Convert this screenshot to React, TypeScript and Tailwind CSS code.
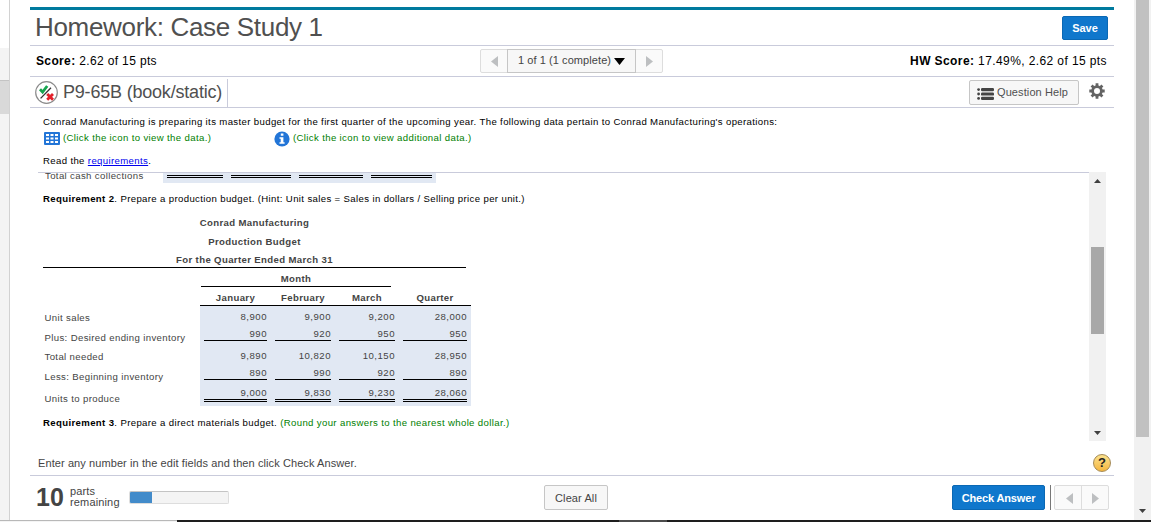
import type { ReactNode } from 'react';

const columns = [
  { width: 'w-[63px]', values: ['8,900', '990', '9,890', '890', '9,000'] },
  { width: 'w-[56px]', values: ['9,900', '920', '10,820', '990', '9,830'] },
  { width: 'w-[56px]', values: ['9,200', '950', '10,150', '920', '9,230'] },
  { width: 'w-[64px]', values: ['28,000', '950', '28,950', '890', '28,060'] },
];

export default function App() {
  return (
    <div
      className={`flex h-[522px] w-[1151px] flex-col overflow-hidden bg-white font-["Liberation_Sans",Arial,sans-serif] whitespace-nowrap text-[#444]`}
    >
      <div className="flex h-[520px]">
        <LeftRail />
        <main className="ml-5 flex w-[1084px] flex-col">
          <TitleBar />
          <ScoreBar />
          <QuestionBar />
          <Prompt />
          <AnswerPanel />
          <Instructions />
          <Footer />
        </main>
        <PageScrollbar />
      </div>
      <div className="flex h-0.5">
        <div className="w-[177px] border-t border-[#b8b8b8] bg-[#f4f4f4]" />
        <div className="w-[442px] bg-[#1e1e1e]" />
        <div className="w-12 bg-[#4c4c4c]" />
        <div className="flex-1 bg-[#1e1e1e]" />
      </div>
    </div>
  );
}

function LeftRail() {
  return (
    <div className="flex w-2.5 flex-col border-r border-[#d2d2d2]">
      <div className="h-12 bg-white" />
      <div className="h-[33px] border-b border-[#c4c4c4] bg-[#f4f4f4]" />
      <div className="h-[33px] bg-[#d9d9d9]" />
      <div className="flex-1 bg-[#f4f4f4]" />
    </div>
  );
}

function TitleBar() {
  return (
    <header className="mt-[7px] flex h-[39px] items-start justify-between border-t-[3px] border-b border-t-[#007a9e] border-b-[#c9cbdb] pr-1.5 pl-[5px]">
      <h1 className="text-[26px] leading-[34px] tracking-[-0.32px] text-[#505050]">
        Homework: Case Study 1
      </h1>
      <button className="mt-1.5 h-6 w-[46px] rounded-xs border border-[#0a68b4] bg-[#0f77cc] text-[11px] leading-5 font-bold text-white">
        Save
      </button>
    </header>
  );
}

function ScoreBar() {
  return (
    <div className="flex h-[31px] items-center border-b border-[#c9cbdb] pr-[7px] pl-1.5 text-xs tracking-[0.36px] text-black">
      <p className="w-[444px]">
        <b>Score:</b> 2.62 of 15 pts
      </p>
      <div className="flex h-6 w-[183px] rounded-xs border border-[#ddd] bg-[#fafafa]">
        <span className="flex w-[26px] items-center justify-center">
          <Arrow dir="left" />
        </span>
        <span className="-my-px flex w-[129px] items-center justify-center gap-[3px] border border-[#c6c6c6] bg-[#f7f7f7] pb-0.5 text-[11px] tracking-[0.08px] text-[#444]">
          1 of 1 (1 complete)
          <svg width="11" height="7" viewBox="0 0 11 7" className="mt-0.5">
            <path d="M0 0h11L5.5 7Z" fill="#000" />
          </svg>
        </span>
        <span className="flex flex-1 items-center justify-center">
          <Arrow dir="right" />
        </span>
      </div>
      <p className="ml-auto tracking-[0.4px]">
        <b>HW Score:</b> 17.49%, 2.62 of 15 pts
      </p>
    </div>
  );
}

function QuestionBar() {
  return (
    <div className="flex h-[31px] border-b border-[#c9cbdb] pl-[5px]">
      <div className="mt-0.5 flex h-7 w-[193px] items-center gap-[5px] border-r border-[#c9cbdb]">
        <svg width="23" height="23" viewBox="0 0 23 23" fill="none" className="mb-0.5">
          <circle cx="11.5" cy="11.5" r="10.8" stroke="#8b8b8b" strokeWidth="1.2" />
          <path d="M5 8.3 7.6 11l4.6-6" stroke="#17a650" strokeWidth="2.8" />
          <path d="m5.6 17.4 10.4-10.6" stroke="#333" strokeWidth="1.3" />
          <path d="m12.2 13 5.8 5.8m0-5.8-5.8 5.8" stroke="#e3202a" strokeWidth="2.8" />
        </svg>
        <h2 className="-mt-0.5 text-lg leading-[26px] tracking-[-0.2px] text-[#505050]">P9-65B (book/static)</h2>
      </div>
      <button className="mt-[3px] ml-auto flex h-[25px] w-[110px] items-center gap-0.5 rounded-xs border border-[#c6c6c6] bg-[#f7f7f7] pl-[7px] text-[11px] tracking-[0.1px] text-[#505050]">
        <svg width="18" height="12" viewBox="0 0 18 12" fill="#444" className="mt-0.5">
          <circle cx="1.6" cy="1.6" r="1.4" />
          <circle cx="1.6" cy="6" r="1.4" />
          <circle cx="1.6" cy="10.4" r="1.4" />
          <rect x="4" y="0" width="13" height="3.2" rx="1.2" />
          <rect x="4" y="4.4" width="13" height="3.2" rx="1.2" />
          <rect x="4" y="8.8" width="13" height="3.2" rx="1.2" />
        </svg>
        Question Help
      </button>
      <svg width="16" height="16" viewBox="0 0 16 16" fill="none" stroke="#636363" className="mt-1.5 mr-[9px] ml-2.5">
        <circle cx="8" cy="8" r="4.4" strokeWidth="2.8" />
        <path
          d="M8 .3v3M8 12.7v3M.3 8h3M12.7 8h3M2.6 2.6l2 2M11.4 11.4l2 2M13.4 2.6l-2 2M4.6 11.4l-2 2"
          strokeWidth="2.8"
        />
      </svg>
    </div>
  );
}

function Prompt() {
  return (
    <section className="flex h-16 flex-col pl-[13px] text-[9.6px] tracking-[0.36px] text-black">
      <p className="mt-[5px] h-[17px] leading-[17px]">
        Conrad Manufacturing is preparing its master budget for the first quarter of the upcoming year. The following
        data pertain to Conrad Manufacturing's operations:
      </p>
      <div className="flex h-[18px] text-[#008000]">
        <div className="flex w-[231px] gap-[3px]">
          <svg width="16" height="13" viewBox="0 0 16 13" className="mt-0.5 ml-px">
            <rect width="16" height="13" rx="1" fill="#2275d7" />
            <path
              d="M2 2h3v2H2zM6.5 2h3v2h-3zM11 2h3v2h-3zM2 5.5h3v2H2zM6.5 5.5h3v2h-3zM11 5.5h3v2h-3zM2 9h3v2H2zM6.5 9h3v2h-3zM11 9h3v2h-3z"
              fill="#fff"
            />
          </svg>
          <span className="leading-[15px]">(Click the icon to view the data.)</span>
        </div>
        <div className="flex gap-[3px]">
          <svg width="16" height="16" viewBox="0 0 16 16" className="mt-px">
            <circle cx="8" cy="8" r="7.6" fill="#2275d7" />
            <path d="M6.8 2.5h2.6v2.3H6.8zM5.5 6.2h3.9v5h1.2v1.6H5.5v-1.6h1.2V7.8H5.5z" fill="#fff" />
          </svg>
          <span className="leading-[15px]">(Click the icon to view additional data.)</span>
        </div>
      </div>
      <p className="mt-1 leading-[18px]">
        Read the <a className="text-[#0000ee] underline">requirements</a>.
      </p>
    </section>
  );
}

function AnswerPanel() {
  return (
    <section className="flex h-[269px] text-[9.6px] tracking-[0.36px]">
      <div className="ml-2 flex w-[1051px] flex-col overflow-hidden border-t border-[#c9cbdb] pl-[5px]">
        <CashCollections />
        <p className="mt-2 leading-4 text-black">
          <b>Requirement 2</b>. Prepare a production budget. (Hint: Unit sales = Sales in dollars / Selling price per
          unit.)
        </p>
        <ProductionBudget />
        <p className="mt-2 leading-[17px] text-black">
          <b>Requirement 3</b>. Prepare a direct materials budget.{' '}
          <span className="text-[#008000]">(Round your answers to the nearest whole dollar.)</span>
        </p>
      </div>
      <div className="flex w-[17px] flex-col items-center bg-[#f1f1f1]">
        <Caret up />
        <div className="mt-[63px] h-[87px] w-[13px] bg-[#a8a8a8]" />
        <div className="mt-auto mb-1.5">
          <Caret />
        </div>
      </div>
    </section>
  );
}

function CashCollections() {
  return (
    <div className="flex h-2.5">
      <span className="-mt-1.5 w-[120px] pl-0.5 leading-[17px]">Total cash collections</span>
      <div className="flex h-2.5 w-[273px] gap-2 bg-[#e1e8f3] pt-0.5 pl-1">
        <DoubleRule className="w-14" />
        <DoubleRule className="w-[60px]" />
        <DoubleRule className="w-16" />
        <DoubleRule className="w-[61px]" />
      </div>
    </div>
  );
}

function ProductionBudget() {
  return (
    <div className="mt-1.5 flex w-[428px] flex-col">
      <div className="flex h-[55px] w-[423px] flex-col items-center border-b border-black font-bold">
        <span className="h-[19px] leading-[19px]">Conrad Manufacturing</span>
        <span className="h-[18px] leading-5">Production Budget</span>
        <span className="h-[17px] leading-5">For the Quarter Ended March 31</span>
      </div>
      <div className="ml-[158px] h-[19px] w-[190px] border-b border-black text-center leading-[22px] font-bold">
        Month
      </div>
      <div className="ml-[157px] flex h-[19px] w-[271px] border-b border-black text-center leading-[21px] font-bold">
        <span className="w-[71px]">January</span>
        <span className="w-16">February</span>
        <span className="w-16">March</span>
        <span className="flex-1">Quarter</span>
      </div>
      <div className="flex h-[100px]">
        <div className="flex w-[157px] flex-col pl-[1.5px]">
          <span className="h-[22px] leading-[23px]">Unit sales</span>
          <span className="h-5 leading-5">Plus: Desired ending inventory</span>
          <span className="h-[19px] leading-[18px]">Total needed</span>
          <span className="h-[21px] leading-[21px]">Less: Beginning inventory</span>
          <span className="leading-[23px]">Units to produce</span>
        </div>
        <div className="flex w-[271px] gap-2 bg-[#e1e8f3] pl-1">
          {columns.map(({ width, values }, i) => (
            <div key={i} className={`flex flex-col text-right ${width}`}>
              <Amount className="h-[19px] leading-[21px]">{values[0]}</Amount>
              <Amount className="h-4 border-b border-black leading-[17px]">{values[1]}</Amount>
              <Amount className="h-[23px] leading-[30px]">{values[2]}</Amount>
              <Amount className="h-4 border-b border-black leading-[18px]">{values[3]}</Amount>
              <Amount className="h-[19px] leading-[25px]">{values[4]}</Amount>
              <DoubleRule className={width} />
            </div>
          ))}
        </div>
      </div>
    </div>
  );
}

function Amount({ className, children }: { className: string; children: ReactNode }) {
  return <span className={`tracking-[0.5px] ${className}`}>{children}</span>;
}

function DoubleRule({ className }: { className: string }) {
  return <div className={`h-[3px] border-y border-black ${className}`} />;
}

function Instructions() {
  return (
    <div className="flex h-[35px] items-center justify-between border-b border-[#c9cbdb] pr-[3px] pl-2 text-[11px] tracking-[0.09px]">
      <p className="mt-2.5">Enter any number in the edit fields and then click Check Answer.</p>
      <span className="mt-2.5 flex h-[18px] w-[18px] items-center justify-center rounded-full border border-[#a58a55] bg-linear-to-b from-[#fbe28c] to-[#f4b63c] text-[13px] font-bold tracking-normal text-[#222]">
        ?
      </span>
    </div>
  );
}

function Footer() {
  return (
    <footer className="flex h-11 items-start pl-1.5">
      <span className="mt-1.5 w-[34px] text-[25px] leading-[30px] font-bold">10</span>
      <p className="mt-[10px] w-[59px] text-[11px] leading-[11px] tracking-[0.15px]">
        parts
        <br />
        remaining
      </p>
      <div className="mt-[15px] h-[13px] w-[100px] overflow-hidden rounded-xs border border-[#ddd] border-t-[#c4c4c4] bg-[#f4f4f4]">
        <div className="-mt-px -ml-px h-[13px] w-[23px] bg-[#428bca]" />
      </div>
      <button className="mt-[9px] ml-[315px] h-[25px] w-16 rounded-xs border border-[#c6c6c6] bg-[#f7f7f7] text-[11px] leading-[22px] tracking-[0.1px]">
        Clear All
      </button>
      <button className="mt-[9px] ml-[344px] h-[25px] w-[93px] rounded-xs border border-[#0a68b4] bg-[#0f77cc] text-[11px] leading-[22px] font-bold tracking-[-0.15px] text-white">
        Check Answer
      </button>
      <div className="mt-[9px] ml-[5px] h-[25px] w-px bg-[#777]" />
      <div className="mt-[9px] ml-[3px] flex h-[25px] w-[55px] rounded-xs border border-[#ddd] bg-[#fafafa]">
        <span className="flex w-[27px] items-center justify-center border-r border-[#ddd] pt-0.5 pl-0.5">
          <Arrow dir="left" />
        </span>
        <span className="flex flex-1 items-center justify-center pt-0.5">
          <Arrow dir="right" />
        </span>
      </div>
    </footer>
  );
}

function PageScrollbar() {
  return (
    <div className="ml-5 flex w-[17px] flex-col items-center bg-[#f1f1f1]">
      <div className="h-[437px] w-[13px] bg-[#c1c1c1]" />
      <div className="mt-auto mb-[7px]">
        <Caret />
      </div>
    </div>
  );
}

function Arrow({ dir }: { dir: 'left' | 'right' }) {
  return (
    <svg width="7" height="11" viewBox="0 0 7 11" fill="#bdbfc1">
      <path d={dir === 'left' ? 'M7 0v11L0 5.5Z' : 'M0 0v11l7-5.5Z'} />
    </svg>
  );
}

function Caret({ up = false }: { up?: boolean }) {
  return (
    <svg width="7" height="4" viewBox="0 0 7 4" fill="#404040" className={up ? 'mt-[7px] mb-px' : ''}>
      <path d={up ? 'M0 4h7L3.5 0Z' : 'M0 0h7L3.5 4Z'} />
    </svg>
  );
}
